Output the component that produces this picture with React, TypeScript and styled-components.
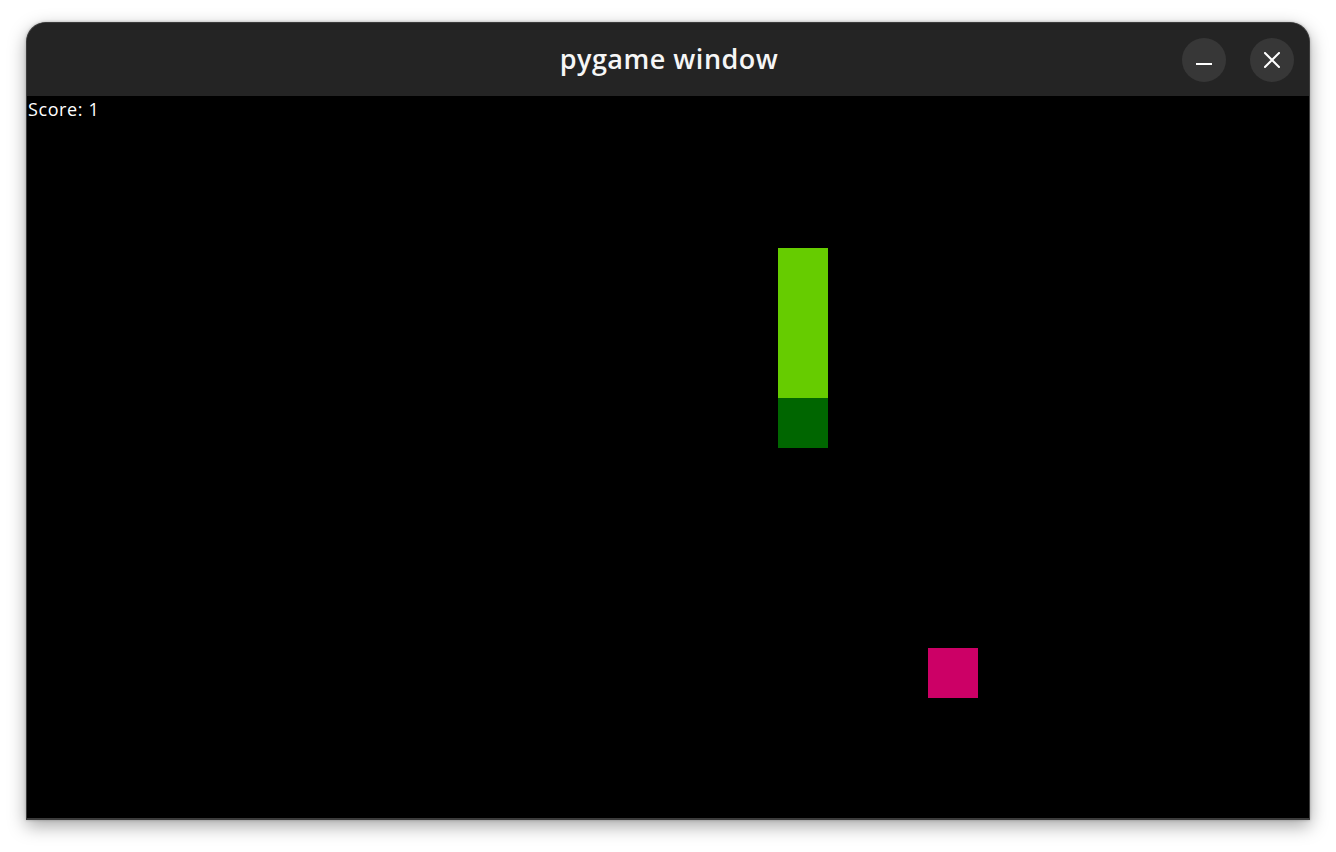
import React from "react";
import styled, { createGlobalStyle } from "styled-components";

const Global = createGlobalStyle`
  html, body { margin: 0; padding: 0; background: #ffffff; }
  body { font-family: "Open Sans", "Noto Sans", sans-serif; }
`;

const Page = styled.div`
  width: 1336px;
  height: 852px;
  padding: 22px 0 0 26px;
  box-sizing: border-box;
  background: #ffffff;
`;

const Window = styled.div`
  width: 1284px;
  box-sizing: border-box;
  border: 1px solid #3c3c3c;
  border-bottom-width: 2px;
  border-radius: 20px 20px 0 0;
  overflow: hidden;
  background: #242424;
  box-shadow: 0 6px 18px rgba(0, 0, 0, 0.35), 0 0 3px rgba(0, 0, 0, 0.25);
`;

const TitleBar = styled.div`
  height: 73px;
  display: grid;
  grid-template-columns: 1fr auto 1fr;
  align-items: center;
  background: #242424;
`;

const Title = styled.div`
  grid-column: 2;
  color: #f6f6f6;
  font-family: "Open Sans", "Noto Sans", sans-serif;
  font-weight: 600;
  font-size: 27px;
  letter-spacing: 0.5px;
  padding-left: 2px;
  margin-top: -3px;
`;

const Controls = styled.div`
  grid-column: 3;
  justify-self: end;
  display: flex;
  gap: 24px;
  padding-right: 15px;
  padding-top: 1px;
`;

const CircleButton = styled.div`
  width: 44px;
  height: 44px;
  border-radius: 50%;
  background: #373737;
  display: flex;
  align-items: center;
  justify-content: center;
`;

const Canvas = styled.div`
  position: relative;
  height: 722px;
  background: #000000;
`;

const Score = styled.div`
  position: absolute;
  left: 1px;
  top: 1px;
  color: #ffffff;
  font-family: "Open Sans", "Noto Sans", sans-serif;
  font-size: 18px;
  letter-spacing: 0.6px;
`;

const Cell = styled.div<{ $color: string }>`
  position: absolute;
  width: 50px;
  height: 50px;
  background: ${(p) => p.$color};
`;

const cells = [
  { x: 751, y: 152, c: "#66cc00" },
  { x: 751, y: 202, c: "#66cc00" },
  { x: 751, y: 252, c: "#66cc00" },
  { x: 751, y: 302, c: "#006600" },
  { x: 901, y: 552, c: "#cc0066" },
];

export default function App() {
  return (
    <>
      <Global />
      <Page>
        <Window>
          <TitleBar>
            <Title>pygame window</Title>
            <Controls>
              <CircleButton>
                <svg width="16" height="16" viewBox="0 0 16 16">
                  <rect x="0" y="11" width="16" height="2" fill="#ffffff" />
                </svg>
              </CircleButton>
              <CircleButton>
                <svg width="16" height="16" viewBox="0 0 16 16">
                  <path d="M1 1 L15 15 M15 1 L1 15" stroke="#ffffff" strokeWidth="2" strokeLinecap="square" />
                </svg>
              </CircleButton>
            </Controls>
          </TitleBar>
          <Canvas>
            <Score>Score: 1</Score>
            {cells.map((s, i) => (
              <Cell key={i} $color={s.c} style={{ left: s.x, top: s.y }} />
            ))}
          </Canvas>
        </Window>
      </Page>
    </>
  );
}
